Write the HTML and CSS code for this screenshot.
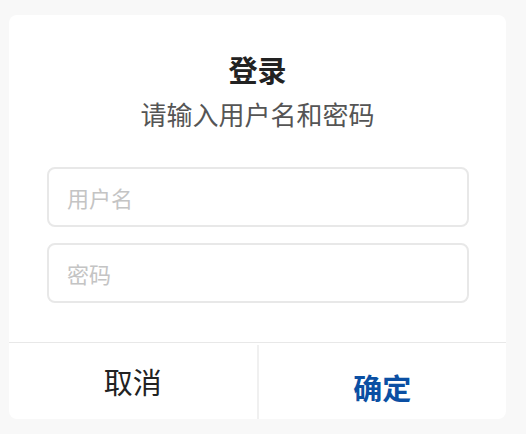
FILE: index.html
```html
<!DOCTYPE html>
<html lang="zh-CN">
  <head>
    <meta charset="UTF-8" />
    <title>登录</title>
    <link rel="stylesheet" href="styles.css">
  </head>
  <body>
    <div class="dialog">
      <div class="dialog-header">
        <h1>登录</h1>
        <p class="subtitle">请输入用户名和密码</p>
      </div>
      <form class="dialog-form">
        <input type="text" name="username" placeholder="用户名" />
        <input type="password" name="password" placeholder="密码" />
      </form>
      <div class="dialog-footer">
        <button type="button" class="btn-cancel">取消</button>
        <button type="button" class="btn-confirm">确定</button>
      </div>
    </div>
  </body>
</html>
```

FILE: styles.css
```css
body {
  font-family: "Noto Sans CJK SC", "Noto Sans", sans-serif;
  background-color: #f8f8f8;
  margin: 0;
  padding: 15px 20px 16px 9px;
}
.dialog {
  background: white;
  border-radius: 8px;
  width: 497px;
  overflow: hidden;
}
.dialog-header {
  padding-top: 34px;
  text-align: center;
}
h1 {
  margin: 0;
  font-size: 29px;
  line-height: 40px;
  font-weight: bold;
  color: #222;
}
.subtitle {
  margin: 7px 0 0;
  font-size: 26px;
  line-height: 36px;
  color: #555;
}
.dialog-form {
  display: flex;
  flex-direction: column;
  gap: 16px;
  padding: 35px 37px 39px 38px;
}
input[type="text"],
input[type="password"] {
  height: 60px;
  padding: 0 18px;
  border: 2px solid #e8e8e8;
  border-radius: 8px;
  box-sizing: border-box;
  font-family: inherit;
  font-size: 22px;
  color: #333;
  outline: none;
}
input::placeholder {
  color: #c4c4c4;
}
.dialog-footer {
  display: flex;
  border-top: 1px solid #e8e8e8;
  height: 76px;
}
.dialog-footer button {
  flex: 1;
  border: none;
  background: none;
  font-family: inherit;
  font-size: 29px;
  padding: 0;
  cursor: pointer;
}
.btn-cancel {
  color: #222;
}
.btn-confirm {
  color: #0b4fa3;
  font-weight: bold;
  border-left: 2px solid #f0f0f0 !important;
  margin-top: 2px;
  padding-top: 9px !important;
}
```
